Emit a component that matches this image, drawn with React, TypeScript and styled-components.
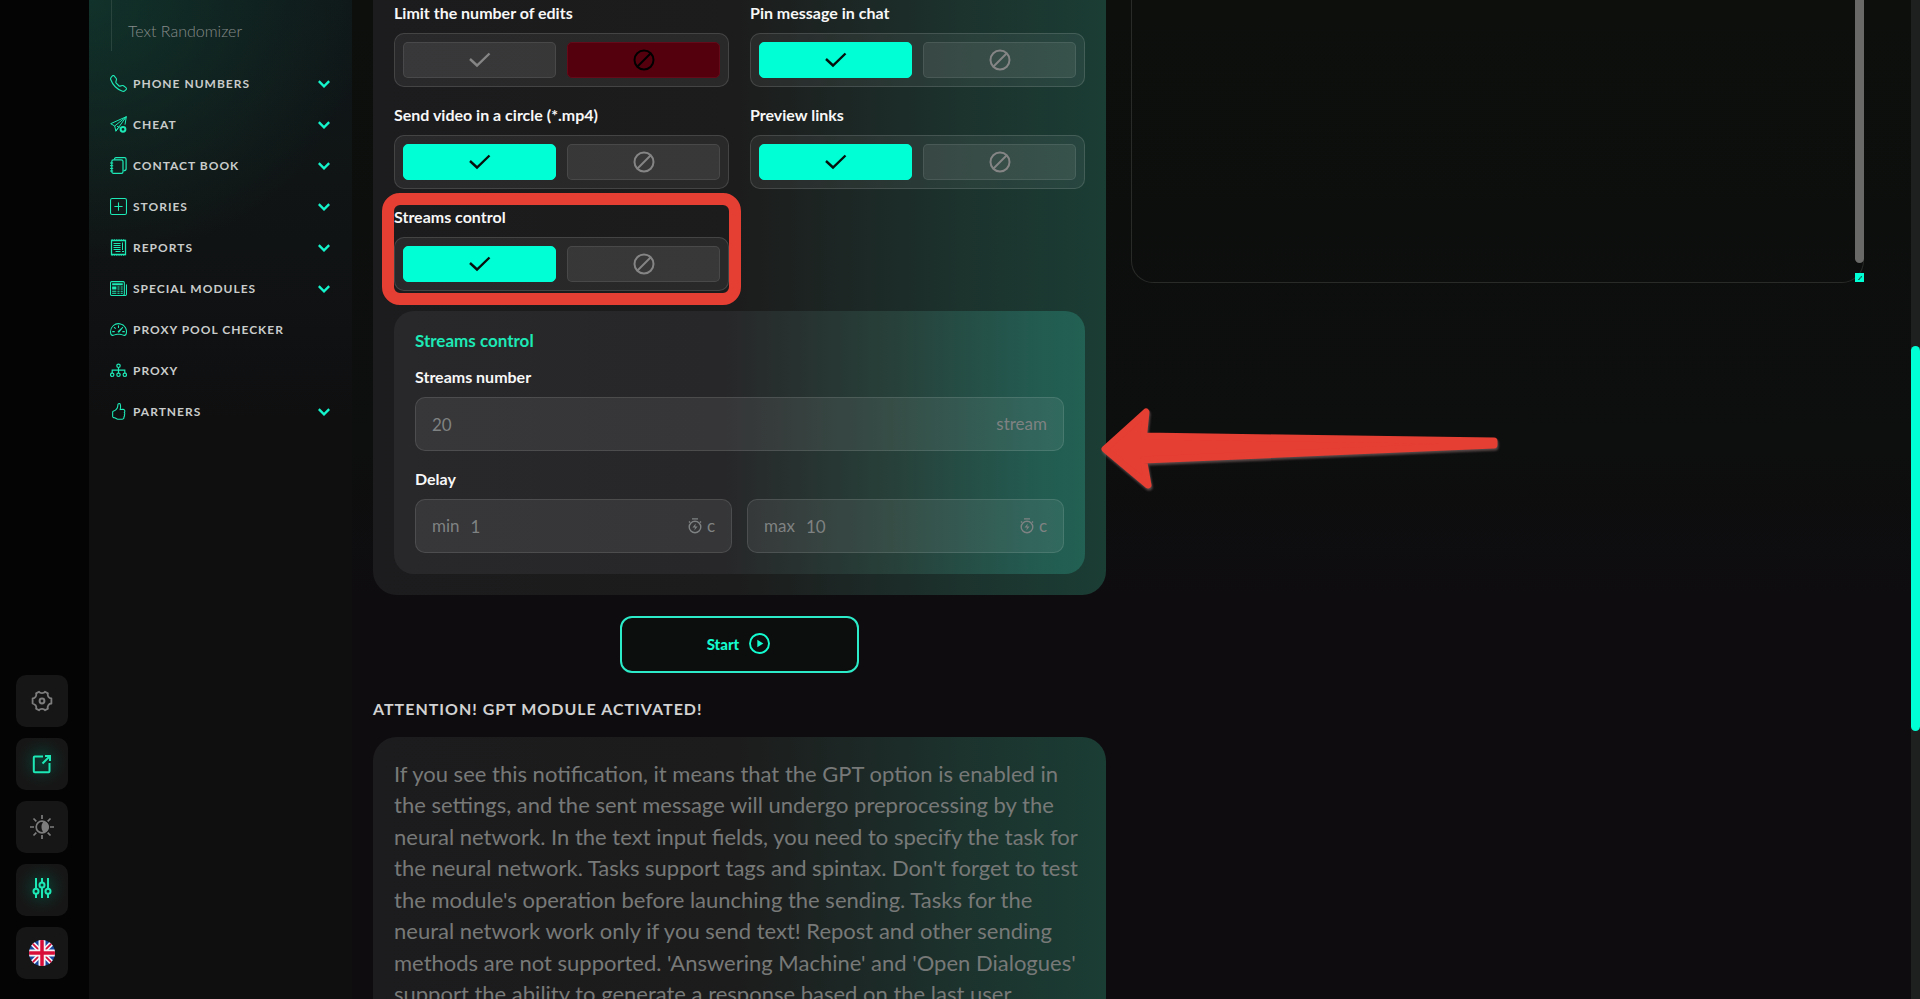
import React, { useId } from "react";
import styled, { createGlobalStyle } from "styled-components";
import { BsTelephone, BsPlusSquare, BsNewspaper, BsSpeedometer2, BsHandThumbsUp } from "react-icons/bs";

const MINT = "#00ffd5";
const MINT_SOFT = "#1de9b6";
const FONT = '"Lato", "Open Sans", sans-serif';

const GlobalStyle = createGlobalStyle`
  * { box-sizing: border-box; }
  body { margin: 0; background: #0d0d0e; color: #fff; font-family: ${FONT}; }
  button, input, textarea { font-family: inherit; }
`;

const Shell = styled.div`
  position: relative;
  display: flex;
  height: 100vh;
  overflow: hidden;
  background: linear-gradient(180deg, #0c0f0c 0%, #0d0e0e 45%, #0e0c0f 60%);
`;

const Rail = styled.nav`
  flex: none;
  width: 89px;
  display: flex;
  flex-direction: column;
  justify-content: flex-end;
  gap: 11px;
  padding: 0 0 20px 16px;
  background: #040404;
`;

const RailButton = styled.button<{ $on?: boolean }>`
  width: 52px;
  height: 52px;
  display: grid;
  place-items: center;
  padding: 0;
  border: 0;
  border-radius: 10px;
  color: ${(p) => (p.$on ? MINT_SOFT : "#7d7d7d")};
  background: ${(p) =>
    p.$on ? "radial-gradient(circle at 50% 46%, #0c3a2f 0%, #141d1b 45%, #161616 65%)" : "#161616"};
`;

const Sidebar = styled.aside`
  flex: none;
  width: 263px;
  background:
    radial-gradient(ellipse 280px 260px at 0 0, rgba(18, 62, 50, 0.7), rgba(18, 50, 44, 0) 100%),
    linear-gradient(180deg, #0f1718 0, #101314 240px, #0f0f10 420px);
`;

const SubMenu = styled.div`
  height: 51px;
  margin-left: 22px;
  padding: 20px 0 0 16px;
  border-left: 1px solid #29443d;
`;

const SubLink = styled.a`
  display: block;
  font-size: 16px;
  line-height: 22px;
  font-weight: 300;
  color: #868b8a;
  text-decoration: none;
`;

const Menu = styled.ul`
  list-style: none;
  margin: 12px 0 0;
  padding: 0 22px 0 21px;
`;

const MenuLink = styled.a`
  display: flex;
  align-items: center;
  gap: 6px;
  height: 41px;
  color: #c9cccb;
  font-size: 12px;
  font-weight: 700;
  letter-spacing: 1px;
  text-decoration: none;
  text-transform: uppercase;

  svg {
    flex: none;
    color: ${MINT_SOFT};
  }
  span {
    flex: 1;
  }
`;

const Main = styled.main`
  flex: 1;
  min-width: 0;
  display: grid;
  grid-template-columns: minmax(0, 1fr) minmax(0, 1fr);
  align-items: start;
  gap: 25px;
  padding: 0 47px 0 21px;
`;

const Column = styled.div`
  min-width: 0;
  display: flex;
  flex-direction: column;
`;

const Panel = styled.section`
  padding: 3px 21px 21px;
  border-radius: 0 0 24px 24px;
  background: linear-gradient(90deg, #1c1b1d 0%, #1c1c1c 50%, #1c322d 80%, #1a3d34 100%);
`;

const ToggleGrid = styled.div`
  display: grid;
  grid-template-columns: 1fr 1fr;
  gap: 18px 21px;
`;

const Caption = styled.div`
  font-size: 16px;
  line-height: 20px;
  font-weight: 700;
  color: #f7f7f7;
  white-space: nowrap;
`;

const Stack = styled.div`
  position: relative;
  display: flex;
  flex-direction: column;
  gap: 10px;
`;

const Highlight = styled.div`
  position: absolute;
  inset: -14px -12px;
  border: 12px solid #e53e33;
  border-radius: 18px;
  pointer-events: none;
`;

const Switch = styled.div`
  display: grid;
  grid-template-columns: 1fr 1fr;
  gap: 11px;
  height: 54px;
  padding: 8px;
  border: 1px solid rgba(255, 255, 255, 0.13);
  border-radius: 10px;
  background: rgba(255, 255, 255, 0.06);
`;

const looks = {
  on: `background: ${MINT}; border-color: ${MINT}; color: #06110e;`,
  off: "background: #54000d; border-color: #640a18; color: #000;",
  idle: "background: rgba(255,255,255,.07); border-color: rgba(255,255,255,.09); color: #858585;",
};

const Option = styled.label<{ $look: keyof typeof looks }>`
  position: relative;
  display: grid;
  place-items: center;
  border: 1px solid;
  border-radius: 5px;
  ${(p) => looks[p.$look]}

  input {
    position: absolute;
    inset: 0;
    margin: 0;
    appearance: none;
    cursor: pointer;
  }
`;

const SubPanel = styled.section`
  position: relative;
  margin-top: 20px;
  padding: 20px 21px 21px;
  border-radius: 20px;
  background: linear-gradient(90deg, #28272a 0%, #272729 48%, #274039 72%, #235a50 92%, #226153 100%);
`;

const SubTitle = styled.h3`
  margin: 0 0 16px;
  font-size: 17px;
  line-height: 20px;
  font-weight: 700;
  color: ${MINT_SOFT};
`;

const Pair = styled.div`
  display: grid;
  grid-template-columns: minmax(0, 1fr) minmax(0, 1fr);
  gap: 15px;
`;

const Field = styled.label`
  display: flex;
  align-items: center;
  gap: 11px;
  height: 54px;
  padding: 0 16px;
  border: 1px solid rgba(255, 255, 255, 0.11);
  border-radius: 10px;
  background: rgba(255, 255, 255, 0.07);
  color: #7f8282;
  font-size: 17px;
  line-height: 22px;

  input {
    flex: 1;
    min-width: 0;
    padding: 0;
    border: 0;
    outline: 0;
    background: none;
    color: inherit;
    font-size: 17px;
  }
`;

const Unit = styled.span`
  display: flex;
  align-items: center;
  gap: 5px;
`;

const Spaced = styled.div`
  margin-top: 18px;
`;

const StartButton = styled.button`
  align-self: center;
  display: flex;
  align-items: center;
  justify-content: center;
  gap: 10px;
  width: 239px;
  height: 57px;
  margin-top: 21px;
  padding: 0 8px 2px 6px;
  border: 2px solid #2bebc8;
  border-radius: 12px;
  background: #0c0e0d;
  color: #14fbcf;
  font-size: 15px;
  font-weight: 900;
`;

const Heading = styled.h2`
  margin: 26px 0 18px;
  font-size: 16px;
  line-height: 20px;
  font-weight: 700;
  letter-spacing: 1px;
  color: #d2d2d2;
`;

const Notice = styled.section`
  padding: 21px;
  border-radius: 24px 24px 0 0;
  background: linear-gradient(90deg, #1c1b1d 0%, #1c1c1c 50%, #1c322d 80%, #1a3d34 100%);
`;

const NoticeText = styled.p`
  margin: 0;
  font-size: 22px;
  line-height: 1.43;
  color: #777978;

  span {
    display: block;
    white-space: nowrap;
  }
`;

const LogBox = styled.div`
  position: relative;
  height: 283px;
  overflow: hidden;
  border: 1px solid #292b29;
  border-top: 0;
  border-radius: 0 0 22px 22px;

  textarea {
    display: block;
    width: 100%;
    height: 100%;
    padding: 20px;
    border: 0;
    outline: 0;
    resize: none;
    background: transparent;
    color: #ccc;
  }
`;

const LogWrap = styled.div`
  position: relative;
`;

const LogThumb = styled.div`
  position: absolute;
  top: 0;
  right: 0;
  width: 9px;
  height: 263px;
  border-radius: 0 0 5px 5px;
  background: #696a68;
`;

const Grip = styled.div`
  position: absolute;
  right: 0;
  bottom: 1px;
  width: 9px;
  height: 9px;
  display: grid;
  background: ${MINT};
`;

const PageTrack = styled.div`
  position: relative;
  flex: none;
  width: 9px;
  background: #1e201f;

  &::after {
    content: "";
    position: absolute;
    top: 34.6%;
    height: 38.6%;
    left: 0;
    right: 0;
    border-radius: 5px;
    background: ${MINT};
  }
`;

const ArrowSvg = styled.svg`
  position: absolute;
  z-index: 2;
  top: 92px;
  left: calc(100% + 14px);
  pointer-events: none;
  filter: drop-shadow(1px 2px 1px rgba(150, 120, 120, 0.55));
`;

const Check = () => (
  <svg width="22" height="16" viewBox="0 0 22 16" fill="none" stroke="currentColor" strokeWidth="2.400">
    <path d="M1 7 8 13.500 20.500 1.500" />
  </svg>
);

const Ban = () => (
  <svg width="22" height="22" viewBox="0 0 22 22" fill="none" stroke="currentColor" strokeWidth="2">
    <circle cx="11" cy="11" r="9.500" />
    <path d="M4.500 17.500 17.500 4.500" />
  </svg>
);

const Chevron = () => (
  <svg width="12" height="8" viewBox="0 0 12 8" fill="none" stroke="#14f5cc" strokeWidth="2.400">
    <path d="M.8 1.200 6 6.300 11.200 1.200" />
  </svg>
);

const Timer = () => (
  <svg width="14" height="16" viewBox="0 0 14 16" fill="none" stroke="currentColor" strokeWidth="1.400">
    <circle cx="7" cy="9" r="5.800" />
    <path d="M4 .9h6M1 3.500l1 1M13 3.500l-1 1" />
    <path d="M7.800 5.500 4.500 9.500H7L6.300 12.500 9.600 8.500H7.200z" fill="currentColor" stroke="none" />
  </svg>
);

const Glyph = ({ children }: { children: React.ReactNode }) => (
  <svg width="17" height="17" viewBox="0 0 17 17" fill="none" stroke="currentColor" strokeWidth="1">
    {children}
  </svg>
);

const PlaneIcon = () => (
  <Glyph>
    <path d="M16.300.7.700 7.700l4 2.300L16.300.7zM4.700 10l1.200 5.200L16.300.7M5.900 15.200 8 12M16.300.7l-1.300 8M7 10.300l2.600 1.200" />
    <circle cx="13" cy="13.300" r="2.400" strokeWidth="2" />
  </Glyph>
);

const BookIcon = () => (
  <Glyph>
    <rect x="1.800" y="2.800" width="11.200" height="13.500" rx="1.600" strokeWidth="1.200" />
    <path d="M4.500 2.500C4.500 1.300 5 .7 6 .7h8.500c1 0 1.600.6 1.600 1.600V12c0 1-.8 1.700-2.600 1.700" strokeWidth="1.200" />
    <path d="M0 6h3.200M0 8.700h3.200M0 11.400h3.200M0 14h3.200" />
  </Glyph>
);

const ReportIcon = () => (
  <Glyph>
    <path d="M1.500 1.500h14v14h-14z" strokeWidth="1.300" />
    <path d="M1.500.9h14M1.500 16.100h14" strokeDasharray="1.300 1" />
    <path d="M3.500 4.500h7M3.500 6.500h7M3.500 8.500h7M3.500 10.500h7M5.500 12.500h5M12.500 3.500v7.500M12 12.500h2" />
  </Glyph>
);

const ProxyIcon = () => (
  <Glyph>
    <circle cx="8.500" cy="3.800" r="1.700" strokeWidth="1.200" />
    <circle cx="2.200" cy="12.800" r="1.700" strokeWidth="1.200" />
    <circle cx="8.500" cy="12.800" r="1.700" strokeWidth="1.200" />
    <circle cx="14.800" cy="12.800" r="1.700" strokeWidth="1.200" />
    <path d="M8.500 5.500V11M2.200 11V8.200h12.600V11" strokeWidth="1.200" />
  </Glyph>
);

const GearIcon = () => (
  <svg width="22" height="22" viewBox="0 0 22 22" fill="none" stroke="currentColor" strokeWidth="1.800" strokeLinejoin="round">
    <path d="M8 1.700c1 1.800 5 1.800 6 0l2.900 1.700c-.9 2.400.9 5 3.500 5.100v5c-2.600.1-4.400 2.700-3.500 5.100L14 20.300c-1-1.800-5-1.800-6 0l-2.900-1.700c.9-2.400-.9-4.400-3.500-5.100v-5c2.600-.1 4.400-2.700 3.500-5.100z" />
    <circle cx="11" cy="11" r="2.400" strokeWidth="2" />
  </svg>
);

const OpenIcon = () => (
  <svg width="20" height="20" viewBox="0 0 20 20" fill="none" stroke="currentColor" strokeWidth="2">
    <path d="M11 2.500H2.800a1 1 0 0 0-1 1v13.700a1 1 0 0 0 1 1h13.700a1 1 0 0 0 1-1V9" />
    <path d="M13 2h5v5M18 2l-7.500 7.500" />
  </svg>
);

const SunMoonIcon = () => (
  <svg width="24" height="24" viewBox="0 0 24 24" fill="none" stroke="currentColor" strokeWidth="1.700">
    <circle cx="12" cy="12" r="5.800" />
    <path d="M12.500 6.500a5.600 5.600 0 1 1 0 11c1.500-.7-1-1.500-1-5.500s2.500-4.800 1-5.500z" fill="currentColor" stroke="none" />
    <path d="M12 0v4M12 20v4M0 12h4M20 12h4M3.500 3.500l2.800 2.800M17.700 17.700l2.800 2.800M3.500 20.500l2.800-2.800M17.700 6.300l2.800-2.800" />
  </svg>
);

const SlidersIcon = () => (
  <svg width="20" height="26" viewBox="0 0 20 26" fill="none" stroke="currentColor" strokeWidth="2">
    <path d="M4 1v10.500M4 17v4M10 1v4.500M10 11v10M16 1v10.500M16 17v4" />
    <circle cx="4" cy="14.200" r="2.500" />
    <circle cx="10" cy="8" r="2.500" />
    <circle cx="16" cy="14.200" r="2.500" />
  </svg>
);

const FlagIcon = () => (
  <svg width="26" height="26" viewBox="0 0 26 26">
    <clipPath id="flag-round">
      <circle cx="13" cy="13" r="13" />
    </clipPath>
    <g clipPath="url(#flag-round)">
      <path fill="#17479e" d="M0 0h26v26H0z" />
      <path d="M0 0l26 26M26 0 0 26" stroke="#f4f1f6" strokeWidth="5" />
      <path d="M0 0l26 26M26 0 0 26" stroke="#d80e38" strokeWidth="1.700" />
      <path d="M13 0v26M0 13h26" stroke="#f4f1f6" strokeWidth="7" />
      <path d="M13 0v26M0 13h26" stroke="#d80e38" strokeWidth="3.500" />
    </g>
  </svg>
);

const PlayIcon = () => (
  <svg width="21" height="21" viewBox="0 0 21 21" fill="none" stroke="currentColor" strokeWidth="1.900">
    <circle cx="10.500" cy="10.500" r="9.500" />
    <path d="M8.300 6.800v7.400l6-3.700z" fill="currentColor" stroke="none" />
  </svg>
);

const menu = [
  { text: "Phone numbers", icon: <BsTelephone size={17} />, opens: true },
  { text: "Cheat", icon: <PlaneIcon />, opens: true },
  { text: "Contact book", icon: <BookIcon />, opens: true },
  { text: "Stories", icon: <BsPlusSquare size={17} />, opens: true },
  { text: "Reports", icon: <ReportIcon />, opens: true },
  { text: "Special modules", icon: <BsNewspaper size={17} />, opens: true },
  { text: "Proxy pool checker", icon: <BsSpeedometer2 size={17} />, opens: false },
  { text: "Proxy", icon: <ProxyIcon />, opens: false },
  { text: "Partners", icon: <BsHandThumbsUp size={17} />, opens: true },
];

const noticeLines = [
  "If you see this notification, it means that the GPT option is enabled in",
  "the settings, and the sent message will undergo preprocessing by the",
  "neural network. In the text input fields, you need to specify the task for",
  "the neural network. Tasks support tags and spintax. Don't forget to test",
  "the module's operation before launching the sending. Tasks for the",
  "neural network work only if you send text! Repost and other sending",
  "methods are not supported. 'Answering Machine' and 'Open Dialogues'",
  "support the ability to generate a response based on the last user",
];

function Toggle({ title, value, marked }: { title: string; value: boolean; marked?: boolean }) {
  const id = useId();
  return (
    <Stack>
      <Caption id={id}>{title}</Caption>
      <Switch role="radiogroup" aria-labelledby={id}>
        <Option $look={value ? "on" : "idle"}>
          <input type="radio" name={id} aria-label="Yes" defaultChecked={value} />
          <Check />
        </Option>
        <Option $look={value ? "idle" : "off"}>
          <input type="radio" name={id} aria-label="No" defaultChecked={!value} />
          <Ban />
        </Option>
      </Switch>
      {marked && <Highlight />}
    </Stack>
  );
}

export default function App() {
  return (
    <>
      <GlobalStyle />
      <Shell>
        <Rail>
          <RailButton aria-label="Settings"><GearIcon /></RailButton>
          <RailButton aria-label="Open" $on><OpenIcon /></RailButton>
          <RailButton aria-label="Theme"><SunMoonIcon /></RailButton>
          <RailButton aria-label="Filters" $on><SlidersIcon /></RailButton>
          <RailButton aria-label="Language"><FlagIcon /></RailButton>
        </Rail>

        <Sidebar>
          <SubMenu>
            <SubLink href="#randomizer">Text Randomizer</SubLink>
          </SubMenu>
          <Menu>
            {menu.map((item) => (
              <li key={item.text}>
                <MenuLink href="#menu">
                  {item.icon}
                  <span>{item.text}</span>
                  {item.opens && <Chevron />}
                </MenuLink>
              </li>
            ))}
          </Menu>
        </Sidebar>

        <Main>
          <Column>
            <Panel>
              <ToggleGrid>
                <Toggle title="Limit the number of edits" value={false} />
                <Toggle title="Pin message in chat" value />
                <Toggle title="Send video in a circle (*.mp4)" value />
                <Toggle title="Preview links" value />
                <Toggle title="Streams control" value marked />
              </ToggleGrid>
              <SubPanel>
                <SubTitle>Streams control</SubTitle>
                <Stack>
                  <Caption as="label" htmlFor="streams">Streams number</Caption>
                  <Field>
                    <input id="streams" defaultValue="20" />
                    <Unit>stream</Unit>
                  </Field>
                </Stack>
                <Spaced>
                  <Stack>
                    <Caption>Delay</Caption>
                    <Pair>
                      <Field>
                        min
                        <input defaultValue="1" />
                        <Unit><Timer />c</Unit>
                      </Field>
                      <Field>
                        max
                        <input defaultValue="10" />
                        <Unit><Timer />c</Unit>
                      </Field>
                    </Pair>
                  </Stack>
                </Spaced>
                <ArrowSvg width="400" height="90" viewBox="0 0 400 90">
                  <path
                    d="M6 46 47 9 44.500 33 395 38V42L44.500 57 49 82z"
                    fill="#e53e33"
                    stroke="#e53e33"
                    strokeWidth="7"
                    strokeLinejoin="round"
                  />
                </ArrowSvg>
              </SubPanel>
            </Panel>
            <StartButton>
              Start <PlayIcon />
            </StartButton>
            <Heading>ATTENTION! GPT MODULE ACTIVATED!</Heading>
            <Notice>
              <NoticeText>
                {noticeLines.map((line) => (
                  <span key={line}>{line}</span>
                ))}
              </NoticeText>
            </Notice>
          </Column>

          <LogWrap>
            <LogBox>
              <textarea aria-label="Log" readOnly />
            </LogBox>
            <LogThumb />
            <Grip>
              <svg width="9" height="9" viewBox="0 0 9 9" fill="none" stroke="#0b6b58">
                <path d="M3 6.500h1.500V5H6V3.500h1" />
              </svg>
            </Grip>
          </LogWrap>
        </Main>
        <PageTrack />
      </Shell>
    </>
  );
}
